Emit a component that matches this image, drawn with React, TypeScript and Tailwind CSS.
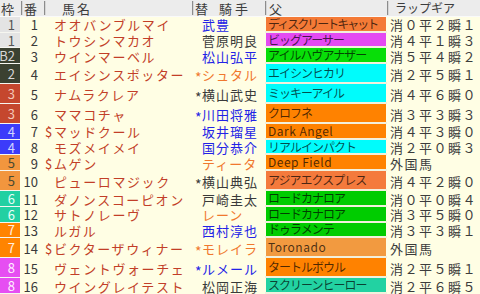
import clsx from 'clsx';

type Entry = {
  waku: string;
  wakuBg: string;
  wakuText: string;
  no: number;
  mark?: boolean;
  name: string;
  gai?: boolean;
  jockey: string;
  jockeyColor: string;
  sire: string;
  sireBg: string;
  latin?: boolean;
  tight?: boolean;
  lap: string;
};

const BLUE = 'text-[#2323e6]';
const DARK = 'text-[#3a3a3a]';
const ORANGE = 'text-[#f0782e]';

const entries: Entry[] = [
  { waku: '1', wakuBg: 'bg-[#e4e4e4]', wakuText: 'text-[#555555]', no: 1, name: 'オオバンブルマイ', jockey: '武豊', jockeyColor: BLUE, sire: 'ディスクリートキャット', sireBg: 'bg-[#f47a36]', tight: true, lap: '消０平２瞬１' },
  { waku: '1', wakuBg: 'bg-[#e4e4e4]', wakuText: 'text-[#555555]', no: 2, name: 'トウシンマカオ', jockey: '菅原明良', jockeyColor: DARK, sire: 'ビッグアーサー', sireBg: 'bg-[#e44af2]', lap: '消４平１瞬３' },
  { waku: 'B2', wakuBg: 'bg-[#3b4131]', wakuText: 'text-[#d8d8d8]', no: 3, name: 'ウインマーベル', jockey: '松山弘平', jockeyColor: BLUE, sire: 'アイルハヴアナザー', sireBg: 'bg-[#08de08]', lap: '消５平４瞬２' },
  { waku: '2', wakuBg: 'bg-[#3b4131]', wakuText: 'text-[#d8d8d8]', no: 4, name: 'エイシンスポッター', mark: true, jockey: 'シュタル', jockeyColor: ORANGE, sire: 'エイシンヒカリ', sireBg: 'bg-[#00fcfc]', lap: '消２平５瞬１' },
  { waku: '3', wakuBg: 'bg-[#c5472e]', wakuText: 'text-[#f4c8b8]', no: 5, name: 'ナムラクレア', mark: true, jockey: '横山武史', jockeyColor: DARK, sire: 'ミッキーアイル', sireBg: 'bg-[#00fcfc]', lap: '消４平６瞬０' },
  { waku: '3', wakuBg: 'bg-[#c5472e]', wakuText: 'text-[#f4c8b8]', no: 6, name: 'ママコチャ', mark: true, jockey: '川田将雅', jockeyColor: BLUE, sire: 'クロフネ', sireBg: 'bg-[#ff8200]', lap: '消３平３瞬３' },
  { waku: '4', wakuBg: 'bg-[#3c3cfa]', wakuText: 'text-[#d0d4ff]', no: 7, gai: true, name: 'マッドクール', jockey: '坂井瑠星', jockeyColor: BLUE, sire: 'Dark Angel', sireBg: 'bg-[#ff8200]', latin: true, lap: '消４平３瞬０' },
  { waku: '4', wakuBg: 'bg-[#3c3cfa]', wakuText: 'text-[#d0d4ff]', no: 8, name: 'モズメイメイ', jockey: '国分恭介', jockeyColor: BLUE, sire: 'リアルインパクト', sireBg: 'bg-[#00fcfc]', lap: '消２平０瞬３' },
  { waku: '5', wakuBg: 'bg-[#f2963e]', wakuText: 'text-[#4a4a30]', no: 9, gai: true, name: 'ムゲン', jockey: 'ティータ', jockeyColor: ORANGE, sire: 'Deep Field', sireBg: 'bg-[#ff8200]', latin: true, lap: '外国馬' },
  { waku: '5', wakuBg: 'bg-[#f2963e]', wakuText: 'text-[#4a4a30]', no: 10, name: 'ピューロマジック', mark: true, jockey: '横山典弘', jockeyColor: DARK, sire: 'アジアエクスプレス', sireBg: 'bg-[#f47a3c]', lap: '消４平２瞬０' },
  { waku: '6', wakuBg: 'bg-[#22d0a2]', wakuText: 'text-[#e8fff8]', no: 11, name: 'ダノンスコーピオン', jockey: '戸崎圭太', jockeyColor: DARK, sire: 'ロードカナロア', sireBg: 'bg-[#00cc00]', lap: '消０平０瞬４' },
  { waku: '6', wakuBg: 'bg-[#22d0a2]', wakuText: 'text-[#e8fff8]', no: 12, name: 'サトノレーヴ', jockey: 'レーン', jockeyColor: ORANGE, sire: 'ロードカナロア', sireBg: 'bg-[#00cc00]', lap: '消３平５瞬０' },
  { waku: '7', wakuBg: 'bg-[#ff8400]', wakuText: 'text-[#fff0e0]', no: 13, name: 'ルガル', jockey: '西村淳也', jockeyColor: BLUE, sire: 'ドゥラメンテ', sireBg: 'bg-[#00cc00]', lap: '消３平３瞬１' },
  { waku: '7', wakuBg: 'bg-[#ff8400]', wakuText: 'text-[#fff0e0]', no: 14, gai: true, name: 'ビクターザウィナー', mark: true, jockey: 'モレイラ', jockeyColor: ORANGE, sire: 'Toronado', sireBg: 'bg-[#f29a40]', latin: true, lap: '外国馬' },
  { waku: '8', wakuBg: 'bg-[#e64ef2]', wakuText: 'text-[#fff0ff]', no: 15, name: 'ヴェントヴォーチェ', mark: true, jockey: 'ルメール', jockeyColor: BLUE, sire: 'タートルボウル', sireBg: 'bg-[#ff8200]', lap: '消２平５瞬１' },
  { waku: '8', wakuBg: 'bg-[#e64ef2]', wakuText: 'text-[#fff0ff]', no: 16, name: 'ウイングレイテスト', jockey: '松岡正海', jockeyColor: DARK, sire: 'スクリーンヒーロー', sireBg: 'bg-[#22d2a2]', lap: '消２平６瞬５' },
];

const cols = 'grid grid-cols-[21px_23px_148px_73px_122px_93px]';

function Divider() {
  return <span className="w-[2px] h-[14px] shrink-0 border-l border-r border-l-[#8c8c8c] border-r-[#d6d6d6]" />;
}

export default function App() {
  return (
    <div
      className="w-[480px] h-[294px] overflow-hidden bg-[#fffee4] grid grid-rows-[17px_repeat(16,1fr)] text-[13px] leading-none"
      style={{ fontFamily: '"Noto Sans CJK JP", "Noto Sans", sans-serif' }}
    >
      <div className={clsx(cols, 'bg-[#ececec] border-b border-[#fafafa] text-[#3c3c3c] items-center')}>
        <div className="pl-[1px]">枠</div>
        <div className="flex items-center gap-[1px]"><Divider />番</div>
        <div className="flex items-center"><Divider /><span className="ml-[16px] tracking-[2px]">馬名</span></div>
        <div className="flex items-center">
          <Divider />
          <span className="ml-[1px]">替</span>
          <span className="ml-[11px] tracking-[3px]">騎手</span>
        </div>
        <div className="flex items-center"><Divider /><span className="ml-[2px]">父</span></div>
        <div className="flex items-center"><Divider /><span className="ml-[6px] text-[12px]">ラップギア</span></div>
      </div>

      {entries.map((e) => (
        <div key={e.no} className={clsx(cols, 'items-stretch')}>
          <div className={clsx('w-[20px] flex items-center justify-end pr-[5px] border-b border-[#f6f6f0]', e.wakuBg, e.wakuText)}>
            {e.waku}
          </div>
          <div className="flex items-center justify-end pr-[6px] text-[#3a3a3a]">{e.no}</div>
          <div className="flex items-center text-[#c23e28] whitespace-nowrap">
            <span className="w-[9px] ml-[1px]">{e.gai ? '$' : ''}</span>
            <span className="tracking-[1.6px]">{e.name}</span>
          </div>
          <div className={clsx('flex items-center whitespace-nowrap', e.jockeyColor)}>
            <span className="w-[7px] ml-[3px] text-[14px] pt-[6px]">{e.mark ? '*' : ''}</span>
            <span className="tracking-[1px]">{e.jockey}</span>
          </div>
          <div className="flex pl-[1px] pr-[1px] border-b-2 border-[#f2f0dc]">
            <div
              className={clsx(
                'flex-1 flex items-center pl-[2px] whitespace-nowrap text-black/70',
                e.sireBg,
                e.latin
                  ? 'text-[12px] tracking-[0.5px]'
                  : e.tight
                    ? 'text-[12px] tracking-[-2px]'
                    : 'text-[12px] tracking-[-1px]'
              )}
            >
              {e.sire}
            </div>
          </div>
          <div className="flex items-center pl-[3px] text-[#3c3c3c] tracking-[1.5px] whitespace-nowrap">
            {e.lap}
          </div>
        </div>
      ))}
    </div>
  );
}
